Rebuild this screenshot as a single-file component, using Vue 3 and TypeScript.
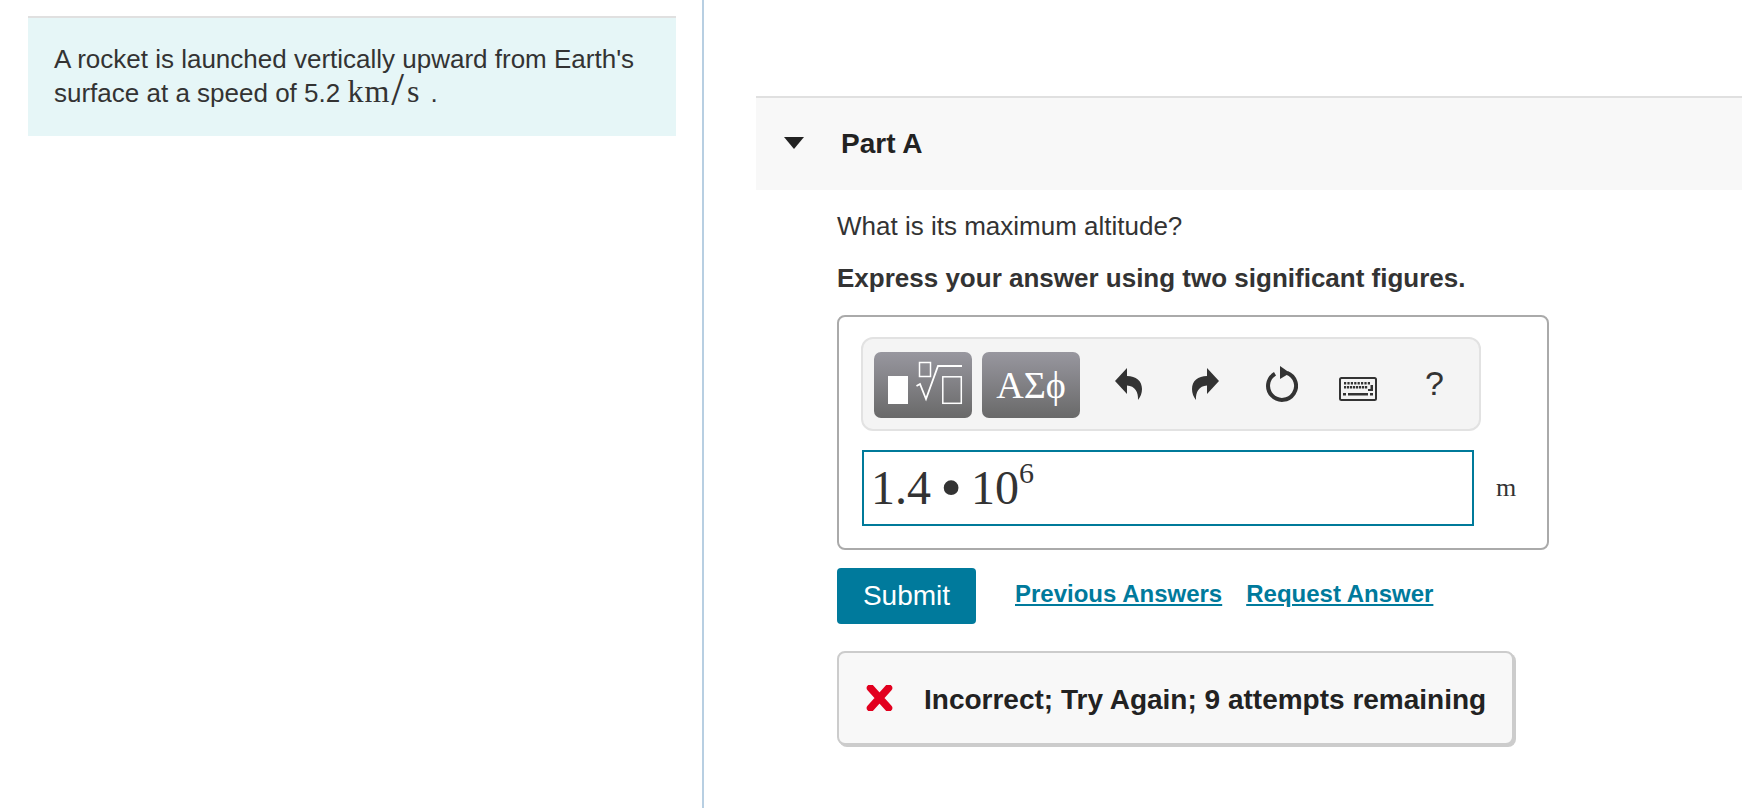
<script setup lang="ts">
const keyDots: number[] = [0, 1, 2, 3, 4, 5, 6, 7]
</script>

<template>
  <div class="page">
    <aside class="left">
      <div class="intro">
        <p>A rocket is launched vertically upward from Earth's<br />surface at a speed of 5.2 <span class="unit">km<span class="slash">/</span>s</span><span class="dot">.</span></p>
      </div>
    </aside>
    <main class="right">
      <header class="part-head">
        <span class="caret"></span>
        <h2>Part A</h2>
      </header>
      <section class="part-body">
        <p class="question">What is its maximum altitude?</p>
        <p class="instruction">Express your answer using two significant figures.</p>
        <div class="answer">
          <div class="toolbar">
            <button class="tpl" aria-label="Templates">
              <svg width="98" height="66" viewBox="0 0 98 66">
                <rect x="14" y="24" width="20" height="28" fill="#fff" />
                <g fill="none" stroke="#fff" stroke-width="1.500">
                  <rect x="45.500" y="10.500" width="11" height="14" />
                  <rect x="68.800" y="24.800" width="18.500" height="26.500" />
                </g>
                <path d="M42.500 34 L46 32 L52 47 L64 14 H88" fill="none" stroke="#fff" stroke-width="1.800" />
              </svg>
            </button>
            <button class="tpl greek">ΑΣϕ</button>
            <svg class="ic undo" width="27" height="32" viewBox="0 0 27 32">
              <path d="M0 13 L12 0 V8 C21 8 27 13 27 21 C27 25 25.500 29 23 32 C23.500 24 20 18 12 17.500 V26 Z" fill="#333" />
            </svg>
            <svg class="ic redo" width="27" height="32" viewBox="0 0 27 32">
              <path d="M27 13 L15 0 V8 C6 8 0 13 0 21 C0 25 1.500 29 4 32 C3.500 24 7 18 15 17.500 V26 Z" fill="#333" />
            </svg>
            <svg class="ic refresh" width="32" height="36" viewBox="0 0 32 36">
              <path d="M9 7.800 A14 14 0 1 0 21 6.800" fill="none" stroke="#333" stroke-width="4" />
              <path d="M14 0 L24 7 L14 13 Z" fill="#333" />
            </svg>
            <svg class="ic keys" width="38" height="24" viewBox="0 0 38 24">
              <rect x="1" y="1" width="36" height="22" rx="1.500" fill="none" stroke="#333" stroke-width="2" />
              <g fill="#333">
                <rect v-for="d in keyDots" :key="'a' + d" :x="5 + d * 3.400" y="5" width="2.200" height="2.500" />
                <rect v-for="d in keyDots" :key="'b' + d" :x="5 + d * 3" y="9" width="2.200" height="2.500" />
                <rect x="4" y="16" width="3" height="2.500" />
                <rect x="9" y="16" width="20" height="2.500" />
                <rect x="31" y="16" width="3" height="2.500" />
                <rect x="31.500" y="8" width="2.500" height="6" />
                <rect x="29" y="12" width="4" height="2" />
              </g>
            </svg>
            <span class="help">?</span>
          </div>
          <div class="entry">
            <div class="input">1.4<span class="times">•</span>10<sup>6</sup></div>
            <span class="m">m</span>
          </div>
        </div>
        <div class="actions">
          <button class="submit">Submit</button>
          <a class="link first" href="#">Previous Answers</a>
          <a class="link" href="#">Request Answer</a>
        </div>
        <div class="feedback">
          <svg width="27" height="26" viewBox="0 0 27 26">
            <path d="M4.500 3 L13.500 13 M22.500 3 L13.500 13 M4.500 23 L13.500 13 M22.500 23 L13.500 13" stroke="#e2001f" stroke-width="7.500" stroke-linecap="round" fill="none" />
          </svg>
          <span class="msg">Incorrect; Try Again; 9 attempts remaining</span>
        </div>
      </section>
    </main>
  </div>
</template>

<style>
body { margin: 0; background: #fff; }
</style>

<style scoped>
.page {
  display: flex;
  height: 808px;
  overflow: hidden;
  font-family: "Liberation Sans", Arial, sans-serif;
  font-size: 26px;
  line-height: 34px;
  color: #333;
}
p { margin: 0; }
.left {
  box-sizing: border-box;
  flex: 0 0 704px;
  padding: 16px 0 0 28px;
  border-right: 2px solid #b8cfe2;
}
.intro {
  box-sizing: border-box;
  width: 648px;
  height: 120px;
  padding: 24px 0 0 26px;
  background: #e6f6f7;
  border-top: 2px solid #e0e0e0;
}
.unit { font-family: "Liberation Serif", serif; font-size: 32px; line-height: 30px; letter-spacing: 1px; }
.slash { font-size: 46px; line-height: 20px; vertical-align: -3px; margin: 0 2px 0 1px; }
.dot { margin-left: 10px; }
.right { flex: 1; min-width: 0; padding: 96px 0 0 52px; }
.part-head {
  box-sizing: border-box;
  display: flex;
  align-items: center;
  height: 94px;
  padding-left: 28px;
  background: #f8f8f8;
  border-top: 2px solid #e0e0e0;
}
.caret {
  width: 0;
  height: 0;
  border-left: 10px solid transparent;
  border-right: 10px solid transparent;
  border-top: 12px solid #222;
  margin-right: 37px;
  margin-top: -2px;
}
h2 { margin: 0; font-size: 28px; line-height: 34px; font-weight: 700; color: #222; }
.part-body { padding: 19px 0 0 81px; }
.question { margin-bottom: 18px; }
.instruction { font-weight: 700; margin-bottom: 20px; }
.answer {
  box-sizing: border-box;
  width: 712px;
  height: 235px;
  padding: 20px 0 0 22px;
  border: 2px solid #aaa;
  border-radius: 8px;
}
.toolbar {
  box-sizing: border-box;
  display: flex;
  align-items: flex-start;
  width: 620px;
  height: 94px;
  padding: 13px 0 0 11px;
  background: #f4f4f4;
  border: 2px solid #e2e2e2;
  border-radius: 12px;
}
.tpl {
  box-sizing: border-box;
  flex: none;
  width: 98px;
  height: 66px;
  padding: 0;
  margin-right: 10px;
  border: 0;
  border-radius: 7px;
  background: linear-gradient(#98979f, #696969);
  color: #fff;
  display: flex;
  align-items: center;
  justify-content: center;
}
.greek { font-family: "Liberation Serif", serif; font-size: 38px; margin-right: 0; }
.ic { flex: none; }
.undo { margin: 16px 0 0 35px; }
.redo { margin: 16px 0 0 50px; }
.refresh { margin: 14px 0 0 47px; }
.keys { margin: 25px 0 0 41px; }
.help { margin: 8px 0 0 48px; font-size: 34px; line-height: 46px; color: #333; }
.entry { display: flex; align-items: center; margin: 19px 0 0 1px; }
.input {
  box-sizing: border-box;
  width: 612px;
  height: 76px;
  padding: 0 0 0 7px;
  border: 2px solid #007a9a;
  font-family: "Liberation Serif", serif;
  font-size: 48px;
  line-height: 71px;
  color: #333;
  white-space: nowrap;
}
.times { display: inline-block; width: 40px; text-align: center; font-size: 62px; line-height: 0; vertical-align: -4px; }
sup { font-size: 30px; line-height: 0; vertical-align: 21px; }
.m { margin-left: 22px; font-family: "Liberation Serif", serif; font-size: 26px; line-height: 24px; }
.actions { display: flex; align-items: flex-start; margin-top: 18px; }
.submit {
  width: 139px;
  height: 56px;
  padding: 0;
  border: 0;
  border-radius: 4px;
  background: #007a9c;
  color: #fff;
  font: 28px/34px "Liberation Sans", Arial, sans-serif;
}
.link {
  margin-top: 11px;
  font-size: 24px;
  line-height: 30px;
  font-weight: 700;
  color: #007a9c;
  text-decoration: underline;
}
.first { margin: 11px 24px 0 39px; }
.feedback {
  box-sizing: border-box;
  display: flex;
  align-items: center;
  gap: 31px;
  width: 677px;
  height: 94px;
  margin-top: 27px;
  padding-left: 27px;
  background: #f8f8f8;
  border: 2px solid #ccc;
  border-radius: 8px;
  box-shadow: 2px 2px 0 #ccc;
  font-size: 28px;
  font-weight: 700;
  color: #222;
  white-space: nowrap;
}
.msg { padding-top: 3px; }
</style>
